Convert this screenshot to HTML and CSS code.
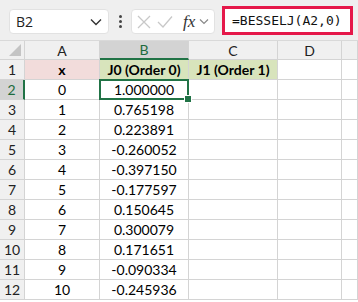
FILE: index.html
```html
<!DOCTYPE html>
<html lang="en">
<head>
    <meta charset="UTF-8">
    <title>BESSELJ</title>
    <link rel="stylesheet" href="styles.css">
</head>
<body>
    <div class="toolbar">
        <div class="namebox">
            <span>B2</span>
            <svg width="12" height="8" viewBox="0 0 12 8"><path d="M1 1.5 L6 6.5 L11 1.5" fill="none" stroke="#333" stroke-width="1.4"/></svg>
        </div>
        <div class="dots"><i></i><i></i><i></i></div>
        <div class="fxbox">
            <svg width="14" height="14" viewBox="0 0 14 14"><path d="M1 1 L13 13 M13 1 L1 13" stroke="#c8c8c8" stroke-width="1.3"/></svg>
            <svg width="16" height="14" viewBox="0 0 16 14"><path d="M1 7 L6 12 L15 1.5" fill="none" stroke="#c8c8c8" stroke-width="1.3"/></svg>
            <span class="fx">fx</span>
            <svg width="10" height="7" viewBox="0 0 10 7"><path d="M1 1.5 L5 5.5 L9 1.5" fill="none" stroke="#888" stroke-width="1.2"/></svg>
        </div>
        <div class="formula">=BESSELJ(A2,0)</div>
    </div>

    <div class="sheet">
        <div class="corner"><span class="tri"></span></div>
        <div class="colhead">A</div>
        <div class="colhead active">B</div>
        <div class="colhead">C</div>
        <div class="colhead">D</div>
        <div class="colhead last"></div>

        <div class="rowhead">1</div>
        <div class="cell bold pink">x</div>
        <div class="cell bold green">J0 (Order 0)</div>
        <div class="cell bold green">J1 (Order 1)</div>
        <div class="cell"></div>
        <div class="cell last"></div>

        <div class="rowhead active">2</div>
        <div class="cell">0</div>
        <div class="cell selected">1.000000</div>
        <div class="cell"></div>
        <div class="cell"></div>
        <div class="cell last"></div>

        <div class="rowhead">3</div>
        <div class="cell">1</div>
        <div class="cell">0.765198</div>
        <div class="cell"></div>
        <div class="cell"></div>
        <div class="cell last"></div>

        <div class="rowhead">4</div>
        <div class="cell">2</div>
        <div class="cell">0.223891</div>
        <div class="cell"></div>
        <div class="cell"></div>
        <div class="cell last"></div>

        <div class="rowhead">5</div>
        <div class="cell">3</div>
        <div class="cell">-0.260052</div>
        <div class="cell"></div>
        <div class="cell"></div>
        <div class="cell last"></div>

        <div class="rowhead">6</div>
        <div class="cell">4</div>
        <div class="cell">-0.397150</div>
        <div class="cell"></div>
        <div class="cell"></div>
        <div class="cell last"></div>

        <div class="rowhead">7</div>
        <div class="cell">5</div>
        <div class="cell">-0.177597</div>
        <div class="cell"></div>
        <div class="cell"></div>
        <div class="cell last"></div>

        <div class="rowhead">8</div>
        <div class="cell">6</div>
        <div class="cell">0.150645</div>
        <div class="cell"></div>
        <div class="cell"></div>
        <div class="cell last"></div>

        <div class="rowhead">9</div>
        <div class="cell">7</div>
        <div class="cell">0.300079</div>
        <div class="cell"></div>
        <div class="cell"></div>
        <div class="cell last"></div>

        <div class="rowhead">10</div>
        <div class="cell">8</div>
        <div class="cell">0.171651</div>
        <div class="cell"></div>
        <div class="cell"></div>
        <div class="cell last"></div>

        <div class="rowhead">11</div>
        <div class="cell">9</div>
        <div class="cell">-0.090334</div>
        <div class="cell"></div>
        <div class="cell"></div>
        <div class="cell last"></div>

        <div class="rowhead">12</div>
        <div class="cell">10</div>
        <div class="cell">-0.245936</div>
        <div class="cell"></div>
        <div class="cell"></div>
        <div class="cell last"></div>
    </div>
</body>
</html>
```

FILE: styles.css
```css
body {
    margin: 0;
    background-color: #fff;
    font-family: Lato, "Open Sans", sans-serif;
    color: #000;
    overflow: hidden;
}

.toolbar {
    height: 40px;
    background-color: #efefef;
    border-bottom: 1px solid #d9d9d9;
    display: flex;
    align-items: center;
    padding-left: 9px;
    box-sizing: content-box;
}

.namebox {
    width: 100px;
    height: 25px;
    box-sizing: border-box;
    background-color: #fff;
    border: 1px solid #e2e2e2;
    border-radius: 4px;
    display: flex;
    align-items: center;
    justify-content: space-between;
    padding: 0 6px 0 6px;
    font-family: "Open Sans", sans-serif;
    font-size: 14px;
    color: #222;
    margin-top: 3px;
}

.dots {
    width: 22px;
    display: flex;
    flex-direction: column;
    align-items: center;
    gap: 2px;
    margin-top: 3px;
}

.dots i {
    width: 3px;
    height: 3px;
    background-color: #444;
    border-radius: 50%;
}

.fxbox {
    width: 84px;
    height: 25px;
    box-sizing: border-box;
    background-color: #fff;
    border: 1px solid #e2e2e2;
    border-radius: 4px;
    display: flex;
    align-items: center;
    gap: 6px;
    padding-left: 5px;
    margin-top: 3px;
}

.fx {
    font-family: "Liberation Serif", serif;
    font-style: italic;
    font-size: 17px;
    color: #333;
    margin-left: 4px;
    margin-right: -2px;
}

.formula {
    margin-left: 7px;
    width: 131px;
    height: 29px;
    box-sizing: border-box;
    background-color: #fff;
    border: 3px solid #e5184a;
    font-family: "DejaVu Sans Mono", monospace;
    font-size: 13px;
    line-height: 23px;
    padding-left: 7px;
    color: #111;
}

.sheet {
    display: grid;
    grid-template-columns: 25px 75px 89px 89px 64px 16px;
    grid-template-rows: 19px repeat(12, 20px);
    height: 261px;
    overflow: hidden;
    font-size: 14px;
    border-bottom: 1px solid #d4d4d4;
}

.sheet > div {
    box-sizing: border-box;
    border-right: 1px solid #d4d4d4;
    border-bottom: 1px solid #d4d4d4;
    display: flex;
    align-items: center;
    justify-content: center;
}

.corner {
    background-color: #f0f0f0;
    position: relative;
}

.tri {
    position: absolute;
    right: 3px;
    bottom: 3px;
    width: 0;
    height: 0;
    border-left: 12px solid transparent;
    border-bottom: 12px solid #c4c4c4;
}

.colhead {
    background-color: #f0f0f0;
    color: #222;
    font-size: 14px;
}

.colhead.active {
    background-color: #d3d3d3;
    color: #1e6b3e;
    border-bottom: 2px solid #217346 !important;
}

.rowhead {
    background-color: #f0f0f0;
    color: #222;
}

.rowhead.active {
    background-color: #d3d3d3;
    color: #1e6b3e;
    border-right: 2px solid #217346 !important;
}

.bold {
    font-weight: bold;
}

.pink {
    background-color: #f2dcdb;
}

.green {
    background-color: #d8e4bc;
}

.selected {
    position: relative;
}

.selected::after {
    content: "";
    position: absolute;
    left: -1px;
    top: -1px;
    right: -1px;
    bottom: -1px;
    border: 2px solid #217346;
}

.selected::before {
    content: "";
    position: absolute;
    right: -4px;
    bottom: -4px;
    width: 6px;
    height: 6px;
    background-color: #217346;
    border: 1px solid #fff;
    z-index: 2;
}
```
